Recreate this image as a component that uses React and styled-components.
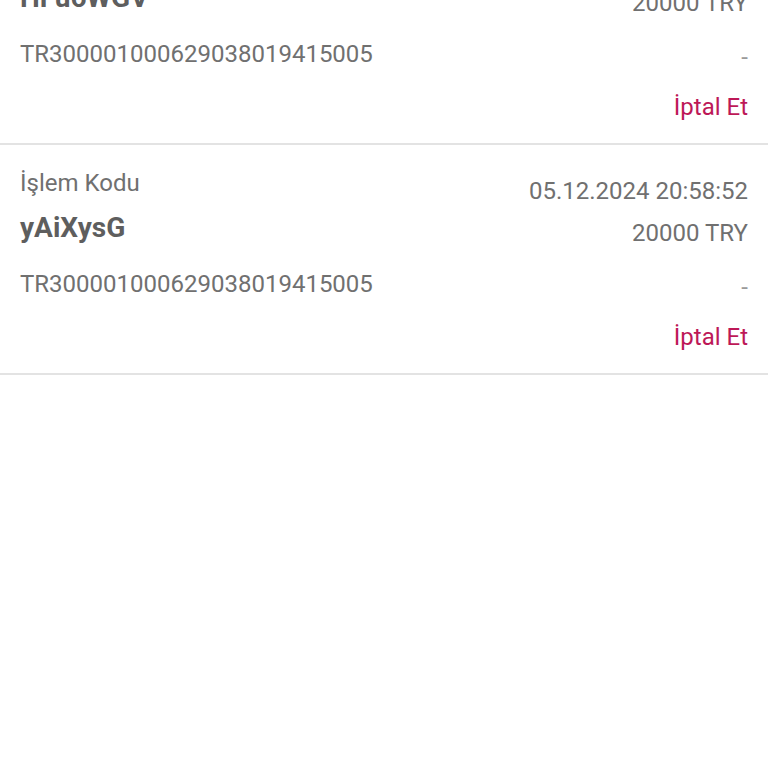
import React from 'react';
import styled, { createGlobalStyle } from 'styled-components';

const GlobalStyle = createGlobalStyle`
  html, body {
    margin: 0;
    padding: 0;
    background: #ffffff;
    font-family: Roboto, "Noto Sans", "Liberation Sans", sans-serif;
    overflow: hidden;
  }
`;

// the list is scrolled a little, first card is cut at the top
const List = styled.div`
  margin-top: -85px;
  display: flex;
  flex-direction: column;
`;

const Item = styled.div`
  padding: 22px 20px 20px;
  border-bottom: 2px solid #e3e3e3;
`;

const TopRow = styled.div`
  display: flex;
  justify-content: space-between;
  align-items: flex-start;
`;

const Column = styled.div`
  display: flex;
  flex-direction: column;
  align-items: ${props => (props.right ? 'flex-end' : 'flex-start')};
  gap: ${props => (props.right ? '10px' : '12px')};
  margin-top: ${props => (props.right ? '8px' : '0')};
`;

const Text = styled.span`
  font-size: 24px;
  line-height: 32px;
  color: #707070;
`;

const Code = styled.span`
  font-size: 28px;
  line-height: 34px;
  font-weight: 700;
  color: #5e5e5e;
`;

const IbanRow = styled.div`
  display: flex;
  justify-content: space-between;
  align-items: center;
  margin-top: 19px;
`;

const Dash = styled.span`
  font-size: 24px;
  line-height: 32px;
  color: #9a9a9a;
  transform: translateY(3px);
`;

const ActionRow = styled.div`
  display: flex;
  justify-content: flex-end;
  margin-top: 21px;
`;

const CancelLink = styled.button`
  border: none;
  background: none;
  padding: 0;
  font-family: inherit;
  font-size: 24px;
  line-height: 32px;
  color: #bd1857;
  cursor: pointer;
`;

const transactions = [
  { id: 1, code: 'HFu6WGV', date: '05.12.2024 20:58:52', amount: '20000 TRY', iban: 'TR300001000629038019415005' },
  { id: 2, code: 'yAiXysG', date: '05.12.2024 20:58:52', amount: '20000 TRY', iban: 'TR300001000629038019415005' },
];

export default function App() {
  return (
    <>
      <GlobalStyle />
      <List>
        {transactions.map(t => (
          <Item key={t.id}>
            <TopRow>
              <Column>
                <Text>İşlem Kodu</Text>
                <Code>{t.code}</Code>
              </Column>
              <Column right>
                <Text>{t.date}</Text>
                <Text>{t.amount}</Text>
              </Column>
            </TopRow>
            <IbanRow>
              <Text>{t.iban}</Text>
              <Dash>-</Dash>
            </IbanRow>
            <ActionRow>
              <CancelLink>İptal Et</CancelLink>
            </ActionRow>
          </Item>
        ))}
      </List>
    </>
  );
}
